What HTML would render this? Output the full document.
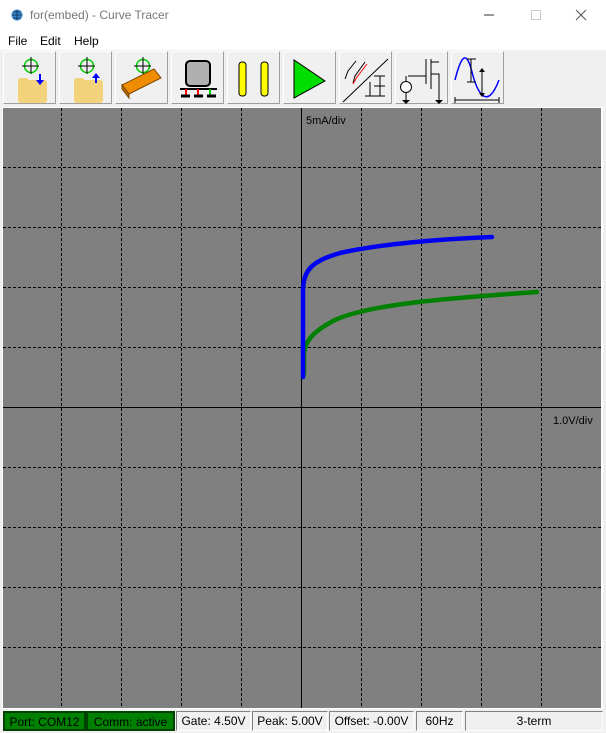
<!DOCTYPE html>
<html><head><meta charset="utf-8"><style>
body{margin:0;width:606px;height:733px;background:#f0f0f0;font-family:"Liberation Sans",sans-serif;position:relative;overflow:hidden}
.title{position:absolute;left:0;top:0;width:606px;height:31px;background:#fff}
.title span{position:absolute;left:30px;top:8px;font-size:12px;color:#777}
.menu{position:absolute;left:0;top:31px;width:606px;height:19px;background:#fff;font-size:12px}
.menu span{position:absolute;top:3px}
.btn{position:absolute;top:51px;width:53px;height:53px;background:#f0f0f0;border:1px solid #a0a0a0;border-top-color:#fff;border-left-color:#fff;box-sizing:border-box}
.btn svg{position:absolute;left:0;top:0}
.sb{position:absolute;top:711px;height:20px;box-sizing:border-box;border:1px solid #808080;border-right-color:#fff;border-bottom-color:#fff;font-size:12px;text-align:center;line-height:18px;background:#f0f0f0}
.g{background:#008000;color:#000;border:2px solid #004000}
</style></head><body>
<div class="title">
<svg width="20" height="20" style="position:absolute;left:9px;top:6px"><circle cx="8" cy="9" r="5.5" fill="#3a86c8"/><path d="M3 9h10M8 4v10M4.5 6h7M4.5 12h7" stroke="#0d3d66" stroke-width="1"/></svg>
<span>for(embed) - Curve Tracer</span>
<svg width="130" height="31" style="position:absolute;left:476px;top:0"><path d="M8 15h10" stroke="#333"/><rect x="55.5" y="10.5" width="9" height="9" fill="none" stroke="#ccc"/><path d="M100 10l10 10M110 10l-10 10" stroke="#555"/></svg>
</div>
<div class="menu"><span style="left:8px">File</span><span style="left:40px">Edit</span><span style="left:74px">Help</span></div>

<div class="btn" style="left:3px"><svg width="53" height="53"><circle cx="27" cy="14" r="6.5" fill="none" stroke="#0c0" stroke-width="1.5"/><path d="M27 5v17M18 14h17" stroke="#000"/><path d="M14 29q0-3 3-3h6l2 2h15q3 0 3 3v17q0 3-3 3H17q-3 0-3-3z" fill="#f2d27a"/><path d="M35 22v6h-3l4 5 4-5h-3v-6z" fill="#00f"/></svg></div>
<div class="btn" style="left:59px"><svg width="53" height="53"><circle cx="27" cy="14" r="6.5" fill="none" stroke="#0c0" stroke-width="1.5"/><path d="M27 5v17M18 14h17" stroke="#000"/><path d="M14 29q0-3 3-3h6l2 2h15q3 0 3 3v17q0 3-3 3H17q-3 0-3-3z" fill="#f2d27a"/><path d="M35 31v-5h-3l4-5 4 5h-3v5z" fill="#00f"/></svg></div>
<div class="btn" style="left:115px"><svg width="53" height="53"><circle cx="27" cy="14" r="6.5" fill="none" stroke="#0c0" stroke-width="1.5"/><path d="M27 5v17M18 14h17" stroke="#000"/><path d="M6 33l32-16 7 9-32 16z" fill="#f08c00" stroke="#7a4500"/><path d="M6 33l7 9v4l-7-9z" fill="#c06800" stroke="#7a4500"/></svg></div>
<div class="btn" style="left:171px"><svg width="53" height="53"><rect x="14" y="9" width="24" height="25" rx="4" fill="#b0b0b0" stroke="#000" stroke-width="2"/><path d="M8 37h37" stroke="#000" stroke-width="2"/><path d="M14 37v6M26 37v6" stroke="#f00" stroke-width="2"/><path d="M38 37v6" stroke="#0c0" stroke-width="2"/><path d="M9 44h9M22 44h9M35 44h9" stroke="#000" stroke-width="3"/></svg></div>
<div class="btn" style="left:227px"><svg width="53" height="53"><rect x="11" y="10" width="7" height="34" rx="3" fill="#ff0" stroke="#000"/><rect x="33" y="10" width="7" height="34" rx="3" fill="#ff0" stroke="#000"/></svg></div>
<div class="btn" style="left:283px"><svg width="53" height="53"><path d="M10 8v38l31-17z" fill="#0d0" stroke="#000"/></svg></div>
<div class="btn" style="left:339px"><svg width="53" height="53"><path d="M3 50L48 7" stroke="#000"/><path d="M16 9l-8 10-3 8M25 10l-10 14-2 7" stroke="#000" fill="none"/><path d="M27 12l-10 13-4 7" stroke="#f00" fill="none"/><path d="M40 24v20M34 24h11M34 34h11M34 44h11M30 30v14M25 44h9" stroke="#000" fill="none"/></svg></div>
<div class="btn" style="left:395px"><svg width="53" height="53"><path d="M30 7v25M12 24h18M35 7v30M35 10h8M35 22h8v4M43 26v18" stroke="#000" fill="none"/><circle cx="10" cy="35" r="5.5" fill="#fff" stroke="#000"/><path d="M10 24v5M10 41v7M43 44v4" stroke="#000"/><path d="M6 48h8l-4 4zM39 48h8l-4 4z" fill="#000"/></svg></div>
<div class="btn" style="left:451px"><svg width="53" height="53"><path d="M3 28C10 0 15 0 20 20S35 60 47 28" stroke="#00f" stroke-width="1.5" fill="none"/><path d="M15 7h9M19 7v23M15 30h9M30 18v25M3 48h44M3 45v6M47 45v6" stroke="#000"/><path d="M27 20h6l-3-4zM27 41h6l-3 4z" fill="#000"/></svg></div>

<svg width="606" height="603" style="position:absolute;left:0;top:106px">
<rect x="0" y="0" width="606" height="603" fill="#f0f0f0"/>
<rect x="2" y="1" width="601" height="602" fill="#fff"/>
<rect x="3" y="2" width="598" height="600" fill="#808080"/>
<g stroke="#000" stroke-dasharray="3,2" stroke-width="1">
<path d="M61.5 2v600M121.5 2v600M181.5 2v600M241.5 2v600M361.5 2v600M421.5 2v600M481.5 2v600M541.5 2v600"/>
<path d="M3 61.5h598M3 121.5h598M3 181.5h598M3 241.5h598M3 361.5h598M3 421.5h598M3 481.5h598M3 541.5h598"/>
</g>
<path d="M301.5 2v600M3 301.5h598" stroke="#000"/>
<text x="306" y="18" font-size="11" font-family="Liberation Sans">5mA/div</text>
<text x="553" y="318" font-size="11" font-family="Liberation Sans">1.0V/div</text>
<path d="M304 268 V250 C304 236 312 226 335 214 C370 198 450 192 537 186" fill="none" stroke="#008000" stroke-width="4.5" stroke-linecap="round"/>
<path d="M303 271 V185 C303 164 312 155 340 147 C380 138 440 133 492 131" fill="none" stroke="#0000f0" stroke-width="4.5" stroke-linecap="round"/>
</svg>

<div class="sb g" style="left:3px;width:83px">Port: COM12</div>
<div class="sb g" style="left:86px;width:89px">Comm: active</div>
<div class="sb" style="left:176px;width:75px">Gate: 4.50V</div>
<div class="sb" style="left:252px;width:76px">Peak: 5.00V</div>
<div class="sb" style="left:329px;width:85px">Offset: -0.00V</div>
<div class="sb" style="left:416px;width:47px">60Hz</div>
<div class="sb" style="left:465px;width:138px">3-term</div>
</body></html>
